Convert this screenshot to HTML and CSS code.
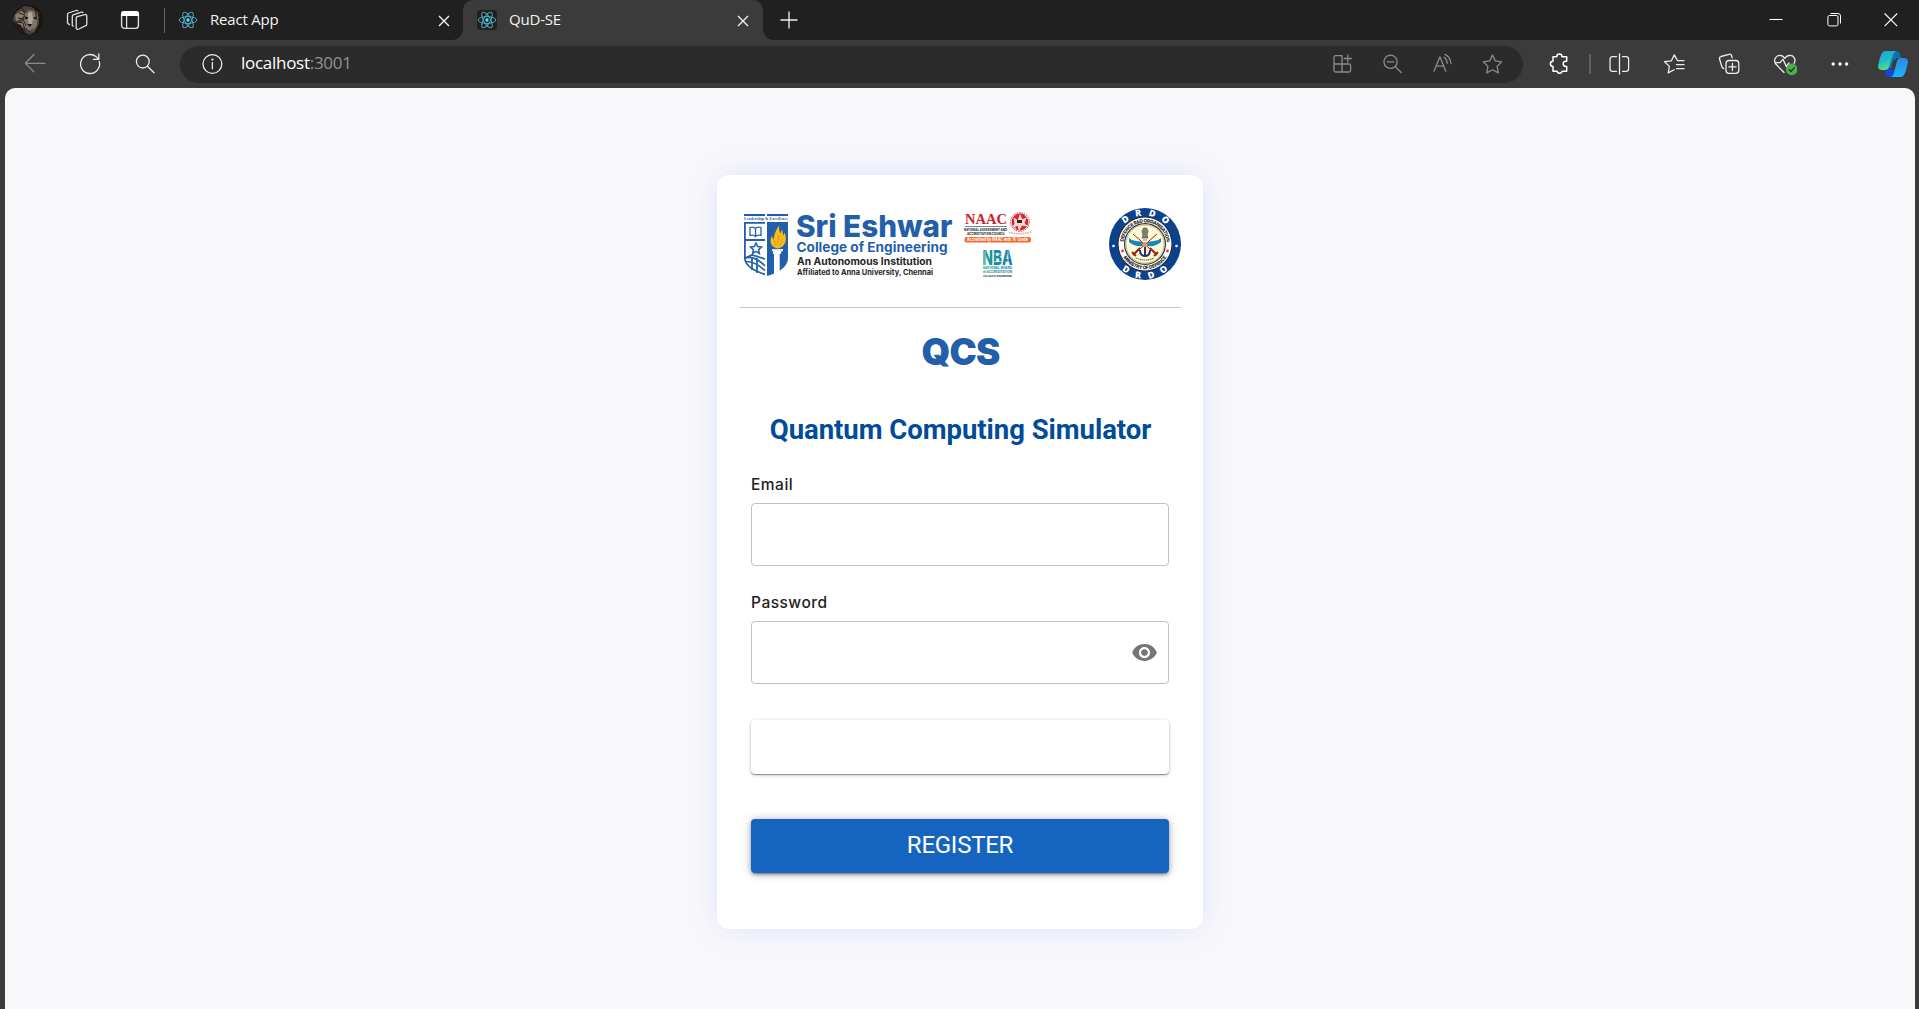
FILE: index.html
```html
<!DOCTYPE html>
<html lang="en">
<head>
<meta charset="utf-8">
<title>QuD-SE</title>
<link rel="stylesheet" href="styles.css">
</head>
<body>
<svg class="defs" width="0" height="0">
  <defs>
    <symbol id="react" viewBox="-12 -12 24 24">
      <circle r="2" fill="#61dafb"/>
      <g fill="none" stroke="#4fb4d0" stroke-width="1.1">
        <ellipse rx="10.6" ry="4.1"/>
        <ellipse rx="10.6" ry="4.1" transform="rotate(60)"/>
        <ellipse rx="10.6" ry="4.1" transform="rotate(120)"/>
      </g>
    </symbol>
    <symbol id="close" viewBox="0 0 12 12"><path d="M1 1l10 10M11 1L1 11" stroke="#f2f2f2" stroke-width="1.4" fill="none"/></symbol>
  </defs>
</svg>

<header class="tabbar">
  <svg class="avatar" viewBox="0 0 30 30">
    <defs><clipPath id="face"><circle cx="15" cy="15" r="15"/></clipPath></defs>
    <g clip-path="url(#face)">
      <rect width="30" height="30" fill="#191310"/>
      <path d="M3 7L11 1l8 1 7 6 0 11-4 8-6 3-5-3-2-7-6 0-4-5z" fill="#4a4038"/>
      <path d="M2 10l6-4 4 3-3 4-6 4zM3 19l7-3 3 4-3 3z" fill="#8c7b6b"/>
      <path d="M12 9l4-4 5 1 4 5-1 9-4 6-4 1-4-4-1-7z" fill="#7d756b"/>
      <path d="M15 8l4-1 1 7-1 5-3 1-1-5z" fill="#aea69a"/>
      <path d="M11.500 11l4.500 2-3.500 1.500zM20 13l4.500-2-2 3.500zM14 19l5 0-2 3zM25 9l2 8-3 9 6-4V8z" fill="#1b1512"/>
      <path d="M0 16l10 2 2 8-7 2zM9 3l3 5M6 8l6 2M5 13l6 1M22 5l2 10M13 23l3 4 4-3M11 16l2 5" stroke="#2b231e" fill="none"/>
      <path d="M0 17l8 3 3 7-7 2z" fill="#211a17"/>
    </g>
  </svg>
  <svg class="ico workspaces" viewBox="0 0 24 24">
    <g fill="none" stroke="#dedede" stroke-width="1.3" stroke-linejoin="round">
      <path d="M11.200 10.100q0-1 1-1.400l7.600-2.100q2-.5 2 1.400v8.200q0 1-1 1.400l-6.900 3.400q-2.700 1-2.700-1.600z"/>
      <path d="M8.600 18.600l-1.300-1V8.300q0-1 1-1.400l8-2.700q1.400-.4 2 .7"/>
      <path d="M4.700 16.900l-2.200-2V6.400q0-1 1-1.400l7.500-2.500q1.400-.5 2 .6"/>
    </g>
  </svg>
  <svg class="ico tabactions" viewBox="0 0 24 24">
    <rect x="3.600" y="3.800" width="16.800" height="16.600" rx="2.800" fill="none" stroke="#dedede" stroke-width="1.400"/>
    <path d="M3 8V6q0-3 3-3h12q3 0 3 3v2z" fill="#fff"/><path d="M8.600 8v12" stroke="#dedede" stroke-width="1.300"/>
  </svg>
  <span class="divider"></span>
  <div class="tab">
    <svg class="fav"><use href="#react"/></svg>
    <span class="tab-title">React App</span>
    <svg class="x"><use href="#close"/></svg>
  </div>
  <div class="tab active">
    <svg class="fav boxed"><use href="#react"/></svg>
    <span class="tab-title">QuD-SE</span>
    <svg class="x"><use href="#close"/></svg>
  </div>
  <svg class="plus" viewBox="0 0 18 18"><path d="M9 .5v17M.5 9h17" stroke="#f0f0f0" stroke-width="1.300"/></svg>
  <div class="window-controls">
    <svg viewBox="0 0 14 14"><path d="M.5 6.500h13" stroke="#fff" stroke-width="1.100"/></svg>
    <svg viewBox="0 0 14 14"><g fill="none" stroke="#fff"><rect x=".9" y="2.500" width="10.100" height="10.400" rx="1.600"/><path d="M3.600 .5h7.400q2.500 0 2.500 2.500v7.500"/></g></svg>
    <svg viewBox="0 0 14 14"><path d="M.6 .5l12.600 12.600M13.200 .5L.6 13.100" stroke="#fff" stroke-width="1.100"/></svg>
  </div>
</header>

<nav class="toolbar">
  <svg class="ico dim" viewBox="0 0 24 24"><path d="M22 11.300H2.500M11 2.500L2.300 11.300l8.700 8.600"/></svg>
  <svg class="ico" viewBox="0 0 24 24"><path d="M21.200 9.400A9.500 9.500 0 1 1 18 4.600l2.400 2.300M20.800 2v5.300h-5.400"/></svg>
  <svg class="ico" viewBox="0 0 24 24"><circle cx="9.800" cy="9.600" r="6.400"/><path d="M14.400 14.200l6.600 6.600"/></svg>
  <div class="address">
    <svg class="ico" viewBox="0 0 24 24"><circle cx="12.400" cy="12" r="9.400"/><path d="M12.400 10.600v6.200"/><circle cx="12.400" cy="7.600" r=".5"/></svg>
    <span class="url">localhost<span>:3001</span></span>
    <div class="address-actions">
      <svg class="ico dim" viewBox="0 0 24 24"><path d="M11.800 3.700H5.600Q4 3.700 4 5.300v13.200Q4 20 5.600 20H19q1.600 0 1.600-1.500v-5q0-1.500-1.600-1.500H4M12 3.700V20M17.800 3v7M14.300 6.500h7"/></svg>
      <svg class="ico dim" viewBox="0 0 24 24"><path d="M15.200 14.500l6 6M7.200 9.800h6.600"/><circle cx="10.500" cy="9.800" r="6.600"/></svg>
      <svg class="ico dim" viewBox="0 0 24 24"><path d="M3 19.500L8.900 5.100 14.800 19.500M5 14.500h7.800M13 5.600q3 2 3.200 6M14 2.700q5.200 2.400 6 9.300" transform="translate(1 -.3)"/></svg>
      <svg class="ico dim" viewBox="0 0 24 24"><path d="M12.500 3l2.800 5.900 6.400.9-4.600 4.600 1.100 6.500-5.700-3.100-5.700 3.100 1.100-6.500L3.300 9.800l6.400-.9z"/></svg>
    </div>
  </div>
  <svg class="ico bright puzzle" viewBox="0 0 24 24"><path d="M6 4.700h3.800a2.600 2.600 0 0 1 5.200 0h4.700v4.500h-.9a2.600 2.600 0 0 0 0 5.200h.9v4.900h-4.500a2.700 2.700 0 0 1-5.200 0H6v-4.900a2.600 2.600 0 0 1 0-5.200z"/></svg>
  <span class="divider small"></span>
  <div class="tools">
    <svg class="ico" viewBox="0 0 24 24"><path d="M9.500 4.700H5.600Q3 4.700 3 7.300v9.400q0 2.600 2.600 2.600h3.900M15.500 4.700h3.600q2.500 0 2.500 2.600v9.400q0 2.600-2.500 2.600h-3.600M12.500 2v20"/></svg>
    <svg class="ico" viewBox="0 0 24 24"><path d="M21.500 8.700h-5.900L12.300 2.900 9.400 8.800l-6.800.9 4.800 4.700-1.200 6.500 6-3.200M14.500 12.700h7.500M14.500 16.700h7.500M17 8.700h5"/></svg>
    <svg class="ico" viewBox="0 0 24 24"><rect x="9" y="8.500" width="12.800" height="12.800" rx="3"/><path d="M15.400 11.300v7.200M11.800 14.900H19M6.800 16.500Q5.400 16.300 5 15L2.600 7.200q-.6-2 1.400-2.700l8-2.200q2-.6 2.600 1.400l.6 2.100"/></svg>
    <svg class="ico heart" viewBox="0 0 24 24"><path d="M11 20.500l-8-8.200C-.5 7.600 3.500 2.500 8 3.500q2.200.4 3.800 2.800Q13.500 3.900 15.800 3.500c4.600-.9 7.800 3.600 5.200 8M3 10.700h4l3-3.500 3.300 7.300 2.700-3.500"/><circle cx="18.700" cy="17.400" r="5.800" class="ok"/><path class="tick" d="M16 17.600l1.900 1.900 3.500-3.900"/></svg>
    <svg class="ico" viewBox="0 0 24 24"><g class="dots"><circle cx="5.200" cy="12" r="1.700"/><circle cx="12" cy="12" r="1.700"/><circle cx="18.600" cy="12" r="1.700"/></g></svg>
    <svg class="copilot" viewBox="0 0 30 28">
      <defs>
        <linearGradient id="cpa" x2=".3" y2="1"><stop stop-color="#1ba7da"/><stop offset=".55" stop-color="#22bac4"/><stop offset="1" stop-color="#5bdc85"/></linearGradient>
        <linearGradient id="cpb" x2="0" y2="1"><stop stop-color="#3484e8"/><stop offset="1" stop-color="#16b7fa"/></linearGradient>
      </defs>
      <path d="M8 1h10q3 0 4 3l1 4h-5L15 20H9z" fill="#0876ae"/>
      <path d="M9 18l-2 4q1 5 5 5h7l3-8z" fill="#1645da"/>
      <path d="M7.500 1H18q-2 1-3 4l-4 12q-1 3-4 3H4q-4 0-4-4 2-10 4-13Q5.200 1 7.500 1z" fill="url(#cpa)"/>
      <path d="M22 8h4q4 0 4 4-2 10-4 13-1.200 2-3.500 2H13q2-1 3-4l3-12q1-3 3-3z" fill="url(#cpb)"/>
      <path d="M15.500 10h3.200l-3 10h-4q1-1 1.300-2z" fill="#3b3b3b"/>
    </svg>
  </div>
</nav>

<main class="page">
  <section class="card">
    <div class="logos">
      <svg class="college" viewBox="0 0 292 72" width="292" height="72">
        <!-- shield -->
        <g fill="#235fa8">
          <rect x="4" y="7" width="21" height="2"/><rect x="27" y="7" width="21" height="2"/>
          <text x="4" y="13.300" font-size="4" font-weight="700" textLength="44" lengthAdjust="spacingAndGlyphs" font-family="Liberation Serif">Leadership &amp; Excellence</text>
          <path d="M27 15h21v37q-1 11-21 17z"/>
        </g>
        <g fill="none" stroke="#235fa8" stroke-width="1.800">
          <path d="M25 15.900H4.900V52q1 9 20.100 15.500M4 33h21"/>
          <path d="M10 20.500q3.500-1 5.500 1 2-2 5.500-1v8q-3.500-1-5.500 1-2-2-5.500-1zM15.500 21.500v8" stroke-width="1.300"/>
          <path d="M16 36l1.600 3.600 3.900.4-2.900 2.600.8 3.800L16 44.400l-3.400 2 .8-3.800-2.900-2.600 3.900-.4z" stroke-width="1.500"/>
          <path d="M6 51q8-3 19 8M6 54.500q9 0 19 9M12 50v13M17 51v15M5 51l7-3 13 4" stroke-width="1.700"/>
        </g>
        <path d="M32.800 43h9.400l-1.500 4h-1v18l-5.700 2.500V47h-1z" fill="#fff"/><path d="M32 42h11v2H32z" fill="#dfe8f4"/>
        <path d="M37.500 41.500q-5-1-6.500-5-1.200-4 1-8 .3 3 1.600 4 .6-7 5.400-14-.2 5 1.400 8 .6-2 2-4 0 4 1.200 6l1-3q2.400 6 .4 10.500-2 4.500-7.500 5.500z" fill="#f7bd16"/>
        <path d="M34 33q2 2 1 6M38 28q2 5-1 10M42 32q0 4-3 7" stroke="#c98b20" stroke-width=".7" fill="none"/>
        <!-- wordmark -->
        <g class="word">
          <text x="56" y="29.500" font-size="30.500" font-weight="800" fill="#235fa8" textLength="156.500" lengthAdjust="spacingAndGlyphs">Sri Eshwar</text>
          <text x="56.500" y="44.700" font-size="13" font-weight="700" fill="#235fa8" textLength="151" lengthAdjust="spacingAndGlyphs">College of Engineering</text>
          <text x="57" y="58" font-size="9.800" font-weight="700" fill="#272727" textLength="135" lengthAdjust="spacingAndGlyphs">An Autonomous Institution</text>
          <text x="57" y="68" font-size="7.600" font-weight="700" fill="#272727" textLength="136" lengthAdjust="spacingAndGlyphs">Affiliated to Anna University, Chennai</text>
        </g>
        <!-- NAAC -->
        <text x="225" y="17.200" font-size="15.500" font-weight="700" fill="#cf2029" font-family="Liberation Serif" textLength="42" lengthAdjust="spacingAndGlyphs">NAAC</text>
        <path d="M225 19.500h42" stroke="#3d698a" stroke-width=".8"/>
        <g font-family="Inter" font-weight="700" fill="#1d1d1d">
          <text x="224" y="23.800" font-size="3.400" textLength="43" lengthAdjust="spacingAndGlyphs">NATIONAL ASSESSMENT AND</text>
          <text x="227" y="27.800" font-size="3.400" textLength="38" lengthAdjust="spacingAndGlyphs">ACCREDITATION COUNCIL</text>
          <text x="243" y="69.600" font-size="2.400" textLength="29" lengthAdjust="spacingAndGlyphs">COLLEGE OF ENGINEERING</text>
        </g>
        <circle cx="280" cy="15" r="8.400" fill="#d72830"/><circle cx="280" cy="15" r="9.300" fill="none" stroke="#d72830" stroke-width="1" stroke-dasharray="1.500 1"/>
        <path d="M274 11l4 3 2-6 2 5 4-2-2 5 3 3-5-1-3 5-1-5-4 2 1-4zM273 18l3 4M285 8l3 4" fill="#f8d7d8" stroke="#fff" stroke-width=".7"/>
        <path d="M277 13h5v3h-5z" fill="#32211f"/>
        <path d="M269 25.500q11 2.500 22-.5" stroke="#e8a3a5" stroke-width="1.500" stroke-dasharray="1.500 .8" fill="none"/>
        <rect x="224.500" y="30" width="66.500" height="5.500" rx="2" fill="#f16b2c"/>
        <text x="227" y="34.400" font-size="4.600" font-weight="700" font-family="Inter" fill="#fff" textLength="61" lengthAdjust="spacingAndGlyphs">Accredited by NAAC with 'A' Grade</text>
        <!-- NBA -->
        <defs><linearGradient id="nba"><stop stop-color="#149e8e"/><stop offset="1" stop-color="#147eb4"/></linearGradient></defs>
        <g fill="url(#nba)" font-family="Inter" font-weight="700">
          <text x="242.500" y="58" font-size="19.500" font-weight="800" textLength="30" lengthAdjust="spacingAndGlyphs">NBA</text>
          <text x="243" y="62.400" font-size="3.600" textLength="29" lengthAdjust="spacingAndGlyphs">NATIONAL BOARD</text>
          <text x="243" y="66.200" font-size="3.600" textLength="29" lengthAdjust="spacingAndGlyphs">of ACCREDITATION</text>
        </g>
        <path d="M245 44v14M254 47h8M254 54.500h8M268 44v14" stroke="#fff" stroke-width=".6"/>
      </svg>
      <svg class="drdo" viewBox="-36 -36 72 72" width="72" height="72">
        <defs>
          <path id="arcTop" d="M-28.300 0A28.300 28.300 0 0 1 28.300 0"/><path id="arcBot" d="M-34.500 0A34.500 34.500 0 0 0 34.500 0"/>
          <path id="inTop" d="M-21.600 0A21.600 21.600 0 0 1 21.600 0"/><path id="inBot" d="M-25.300 0A25.300 25.300 0 0 0 25.300 0"/>
        </defs>
        <circle r="36" fill="#0b428b"/><circle r="27.300" fill="#222"/><circle r="26.500" fill="#fff"/>
        <circle r="20.400" fill="#fffbd2" stroke="#333" stroke-width="1.200"/><circle r="19" fill="none" stroke="#8a8770" stroke-width=".5"/>
        <g font-family="Open Sans" font-weight="800" fill="#fff" font-size="9" text-anchor="middle">
          <text letter-spacing="6.500"><textPath href="#arcTop" startOffset="54%">DRDO</textPath></text>
          <text letter-spacing="8"><textPath href="#arcBot" startOffset="54%">DRDO</textPath></text>
        </g>
        <g font-family="Inter" font-weight="800" fill="#252525" font-size="4.800" text-anchor="middle">
          <text letter-spacing="-.38"><textPath href="#inTop" startOffset="50%">DEFENCE R&amp;D ORGANISATION</textPath></text>
          <text letter-spacing="-.2"><textPath href="#inBot" startOffset="50%">MINISTRY OF DEFENCE</textPath></text>
        </g>
        <circle cx="-31.500" cy="2" r="1.300" fill="#fff"/><circle cx="31.500" cy="2" r="1.300" fill="#fff"/>
        <circle cx="-22.500" cy="7" r="1.400" fill="#e23a35"/><circle cx="22.500" cy="7" r="1.400" fill="#e23a35"/>
        <path d="M-1.500-16h3l1.500 3-1 4 1 3h-6l1-3-1-4zM-2-4h4" fill="#807f75" stroke="#55554e" stroke-width=".7"/>
        <path d="M-12-10L12 11M12-10L-12 11" stroke="#942724" stroke-width="1"/>
        <path d="M-5 4l-7 7M5 4l7 7M-13 8l4 4M13 8l-4 4" stroke="#98231f" stroke-width="2"/>
        <path d="M-16-6q3 3 7 3 5 0 7 2v3q-9 1-14-4zM16-6q-3 3-7 3-5 0-7 2v3q9 1 14-4z" fill="#1985bd"/>
        <path d="M0 3v9M-5 6q0 6 5 6t5-6" stroke="#29266e" stroke-width="1.900" fill="none"/>
        <circle r="2.600" cy=".5" fill="#e69268"/><path d="M-9 14q9 4 18 0" stroke="#77704c" stroke-width="1.200" stroke-dasharray="1.500 .5" fill="none"/>
      </svg>
    </div>
    <h1 class="brand">QCS</h1>
    <h2 class="title">Quantum Computing Simulator</h2>
    <form class="form">
      <label class="label" for="email">Email</label>
      <div class="field"><input id="email" type="text"></div>
      <label class="label second" for="pw">Password</label>
      <div class="field"><input id="pw" type="password">
        <svg class="eye" viewBox="0 0 24 24"><path d="M12 4.500C7 4.500 2.730 7.610 1 12c1.730 4.390 6 7.500 11 7.500s9.270-3.110 11-7.500c-1.730-4.390-6-7.500-11-7.500zM12 17c-2.760 0-5-2.240-5-5s2.240-5 5-5 5 2.240 5 5-2.240 5-5 5zm0-8c-1.660 0-3 1.340-3 3s1.340 3 3 3 3-1.340 3-3-1.340-3-3-3z"/></svg>
      </div>
      <button class="btn blank" type="button"></button>
      <button class="btn register" type="button">REGISTER</button>
    </form>
  </section>
</main>
</body>
</html>
```
FILE: styles.css
```css
* { box-sizing: border-box; }
html, body { height: 100%; }
body {
  margin: 0;
  display: flex;
  flex-direction: column;
  overflow: hidden;
  background: #3b3b3b;
  font-family: "Open Sans", "Noto Sans", sans-serif;
}
svg { display: block; flex: none; }
.defs { height: 0; position: absolute; }

.tabbar { flex: none; display: flex; align-items: center; height: 40px; background: #202020; padding-left: 13px; }
.avatar { width: 30px; height: 30px; }
.ico { width: 24px; height: 24px; }
.workspaces { margin-left: 22px; }
.tabactions { margin-left: 29px; }
.divider { flex: none; width: 1px; height: 25px; background: #666; margin-left: 22px; }
.tab { flex: none; display: flex; align-items: center; height: 40px; width: 298px; padding: 0 13px 0 13px; color: #f4f4f4; font-size: 15px; }
.tab.active { width: 300px; background: #3b3b3b; border-radius: 10px 10px 0 0; position: relative; padding: 0 14px; }
.tab.active::before, .tab.active::after {
  content: ""; position: absolute; bottom: 0; width: 10px; height: 10px;
}
.tab.active::before { left: -10px; background: radial-gradient(circle at 0 0, transparent 9.5px, #3b3b3b 10px); }
.tab.active::after { right: -10px; background: radial-gradient(circle at 100% 0, transparent 9.5px, #3b3b3b 10px); }
.fav { width: 20px; height: 20px; }
.boxed { background: #202020; border-radius: 3px; }
.tab-title { flex: 1; margin-left: 12px; letter-spacing: -.2px; line-height: 20px; padding-bottom: 2px; }
.x { width: 12px; height: 12px; }
.tab .x { margin-top: 1px; }
.plus { width: 18px; height: 18px; margin-left: 17px; }
.window-controls { display: flex; gap: 43.3px; margin-left: auto; padding-right: 21px; }
.window-controls svg { width: 14px; height: 14px; }

.toolbar { flex: none; display: flex; align-items: center; height: 48px; padding-left: 23px; gap: 31px; }
.toolbar .ico { fill: none; stroke: #ececec; stroke-width: 1.3; stroke-linejoin: round; stroke-linecap: round; }
.toolbar .dim { stroke: #8b8b8b; }
.toolbar .bright { stroke: #fff; stroke-width: 1.5; }
.ok { fill: #4cae4f; stroke: none; }
.tick { stroke: #173a19; }
.dots { fill: #fff; stroke: none; }
.address {
  flex: none; display: flex; align-items: center; width: 1343px; height: 37px; margin-left: -8px;
  border-radius: 19px; background: #2b2b2b; padding: 0 19px 0 20px;
}
.url { margin-left: 17px; font-size: 17px; letter-spacing: -.28px; color: #fff; line-height: 24px; padding-bottom: 2px; }
.url span { color: #929292; }
.address-actions { display: flex; gap: 26px; margin-left: auto; }
.puzzle { margin-left: -7px; }
.divider.small { height: 20px; margin-left: -13px; width: 2px; background: #606060; }
.tools { display: flex; align-items: center; gap: 31.2px; margin-left: -15px; }
.copilot { width: 30px; height: 28px; margin-left: -5px; }

.page {
  flex: 1; margin: 0 4px 0 5px; background: #f8f8fb; border-radius: 10px 10px 0 0;
  padding-top: 87px; display: flex; justify-content: center; align-items: flex-start;
}
.card {
  width: 486px; height: 754px; border-radius: 12px; background: #fff;
  box-shadow: 0 0 30px rgba(130, 145, 255, .2);
  padding: 32px 22px 0 23px;
}
.logos { display: flex; justify-content: space-between; height: 101px; border-bottom: 1px solid #b7cbdf; }
.college, .drdo { overflow: visible; }
.drdo { margin-top: 1px; }
.word { font-family: Inter, sans-serif; }
.brand {
  margin: 20px 0 0; height: 60px; line-height: 49px; text-align: center;
  font-family: Inter, sans-serif; font-weight: 900; font-size: 36.5px; letter-spacing: -.7px; color: #235fa8;
}
.title {
  margin: 24px 0 0; height: 36px; line-height: 36px; text-align: center; white-space: nowrap;
  font-family: Roboto, sans-serif; font-weight: 700; font-size: 27.5px; letter-spacing: -.04px; color: #004c9b;
}
.form { display: flex; flex-direction: column; padding: 25px 12px 0 11px; }
.label { height: 30px; line-height: 24px; font-family: Inter, sans-serif; font-size: 15.5px; letter-spacing: .5px; font-weight: 500; color: #222; }
.label.second { margin-top: 25px; }
.field { display: flex; align-items: center; height: 63px; border: 1px solid #c1c1c1; border-radius: 4px; padding-right: 10px; }
.field input { flex: 1; min-width: 0; border: 0; outline: 0; background: none; height: 40px; }
.eye { width: 27px; height: 27px; fill: #757575; }
.btn { height: 54px; border: 0; border-radius: 4px; font-family: Roboto, sans-serif; font-size: 24px; padding: 0; }
.blank { margin-top: 36px; background: #fff; box-shadow: 0 1px 1px rgba(0,0,0,.35), 0 1px 4px rgba(0,0,0,.22); }
.register {
  margin-top: 45px; background: #1565c0; color: #fff; line-height: 50px; padding-bottom: 2px; letter-spacing: -.25px;
  box-shadow: 0 3px 1px -2px rgba(0,0,0,.2), 0 2px 3px rgba(0,0,0,.2), 0 1px 8px rgba(0,0,0,.35);
}
```
